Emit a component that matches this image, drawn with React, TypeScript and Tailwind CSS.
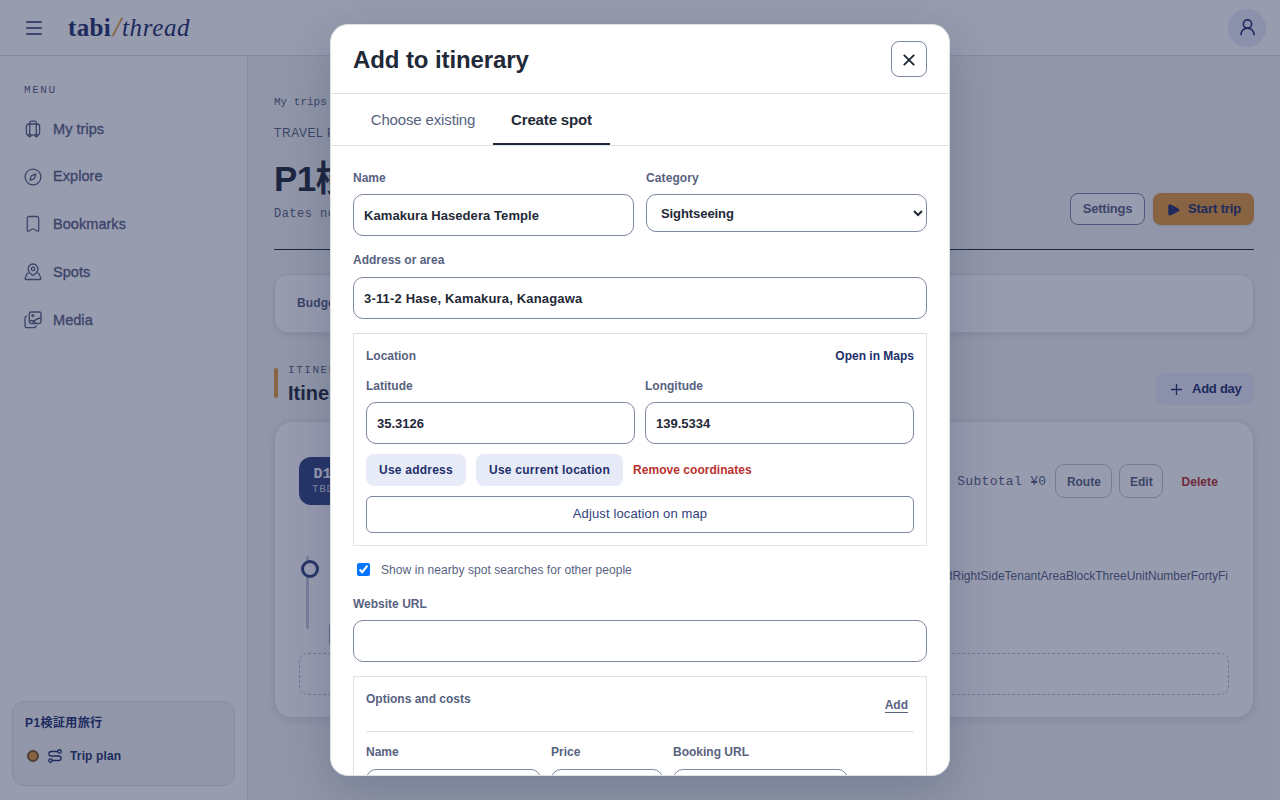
import type { ReactNode } from "react";

const SANS = "font-['Liberation_Sans','Noto_Sans_CJK_JP',sans-serif]";
const MONO = "font-['Liberation_Mono',monospace]";
const LABEL = "text-[12px] leading-4 font-bold text-[#58627f]";
const INPUT =
  "block w-full h-[42px] rounded-[10px] border border-[#7b86a0] bg-white px-[10px] text-[13px] font-bold text-[#1f2937] outline-none";

function Icon({ size = 18, width = 1.5, className = "", children }: { size?: number; width?: number; className?: string; children: ReactNode }) {
  return (
    <svg
      width={size}
      height={size}
      viewBox="0 0 18 18"
      fill="none"
      stroke="currentColor"
      strokeWidth={width}
      strokeLinecap="round"
      strokeLinejoin="round"
      className={`shrink-0 ${className}`}
    >
      {children}
    </svg>
  );
}

const LuggageIcon = () => (
  <Icon width={1.3}>
    <rect x="2.400" y="4" width="13.200" height="11.200" rx="2.400" />
    <path d="M5.700 14V3.200A2 2 0 0 1 7.700 1.200h2.600a2 2 0 0 1 2 2V14" />
    <circle cx="5.700" cy="15.500" r="1.300" />
    <circle cx="12.300" cy="15.500" r="1.300" />
  </Icon>
);
const CompassIcon = () => (
  <Icon width={1.3}>
    <circle cx="9" cy="9" r="7.9" />
    <path d="M7.500 7.900 11.300 6.100c.4-.2.700.1.500.5L10.400 10.200c-.1.300-.3.500-.5.600L6.600 12.100c-.4.200-.7-.1-.5-.5L7.100 8.400c.1-.2.200-.4.400-.5Z" />
  </Icon>
);
const BookmarkIcon = () => (
  <Icon width={1.3}>
    <path d="M3.300 15.200V3.200a1.700 1.700 0 0 1 1.700-1.700h8a1.700 1.700 0 0 1 1.700 1.700v12c0 1-.7 1.300-1.500.8L9.600 14a1.100 1.100 0 0 0-1.200 0L4.800 16c-.8.500-1.500.2-1.500-.8Z" />
  </Icon>
);
const SpotIcon = () => (
  <Icon width={1.3}>
    <path d="M9 12.300c-.5 0-.9-.2-1.200-.5C5.800 10 4.100 8.300 4.100 5.900a4.900 4.900 0 0 1 9.800 0c0 2.400-1.700 4.100-3.700 5.900-.3.300-.7.500-1.200.5Z" />
    <circle cx="9" cy="5.900" r="1.700" />
    <path d="M4.200 10.200c-.7.200-1.200.6-1.500 1.300L1.200 15c-.3.800.2 1.500 1 1.500h13.600c.8 0 1.300-.7 1-1.500l-1.500-3.500c-.3-.7-.8-1.100-1.500-1.300" />
  </Icon>
);
const MediaIcon = () => (
  <Icon width={1.3}>
    <rect x="5.300" y="1" width="11.700" height="11.500" rx="1.800" />
    <circle cx="8.800" cy="4.600" r="0.900" />
    <path d="M8.600 12.300c1.400-2.400 3.800-5 8.200-5.300M6 9.900c2-.8 4-.1 5.200 1.400" />
    <path d="M2.600 5.200C1.500 5.300 1 5.900 1 7v7.400c0 1.400.8 2.200 2.200 2.200h7c1.200 0 1.800-.6 1.900-1.700" />
  </Icon>
);
const RouteIcon = () => (
  <Icon size={14} width={1.7}>
    <circle cx="14.800" cy="3.200" r="2.200" />
    <circle cx="3.200" cy="14.800" r="2.200" />
    <path d="M12.300 3.200H4.100a2.900 2.900 0 0 0 0 5.800h9.800a2.900 2.900 0 0 1 0 5.800H5.700" />
  </Icon>
);

const MENU = [
  { label: "My trips", icon: <LuggageIcon /> },
  { label: "Explore", icon: <CompassIcon /> },
  { label: "Bookmarks", icon: <BookmarkIcon /> },
  { label: "Spots", icon: <SpotIcon /> },
  { label: "Media", icon: <MediaIcon /> },
];

function Header() {
  return (
    <header className="flex h-14 shrink-0 items-center border-b border-[#dfe2e2] bg-white pl-[26px] pr-[14px]">
      <svg width="16" height="16" viewBox="0 0 16 16" stroke="#22306b" strokeWidth="1.6" strokeLinecap="round">
        <path d="M0.800 2h14.400M0.800 8h14.400M0.800 14h14.400" />
      </svg>
      <div className="ml-[26px] flex items-baseline whitespace-nowrap font-['Liberation_Serif',serif] text-[25px] leading-8 text-[#22306b]">
        <span className="w-[44px] font-bold tracking-[0.35px]">tabi</span>
        <span className="w-[10px] text-center text-[27px] italic text-[#e39a3b] [-webkit-text-stroke:0.5px_currentColor]">/</span>
        <span className="italic tracking-[0.65px]">thread</span>
      </div>
      <div className="ml-auto flex size-[38px] items-center justify-center rounded-full bg-[#e7ebf7] text-[#22306b]">
        <Icon width={1.6}>
          <circle cx="9.500" cy="5" r="4.100" />
          <path d="M3 15.800c0-3.800 2.700-6.700 6.500-6.700s6.500 2.900 6.500 6.700" />
        </Icon>
      </div>
    </header>
  );
}

function Sidebar() {
  return (
    <aside className="flex w-[248px] shrink-0 flex-col border-r border-[#dfe2e2] bg-white px-3 pb-[14px] pt-[26px]">
      <div className={`${MONO} pl-3 text-[11px] leading-4 tracking-[1.54px] text-[#58627f]`}>MENU</div>
      <nav className="mt-[7px]">
        {MENU.map((item) => (
          <div key={item.label} className="flex h-[47.8px] items-center gap-[11px] pl-3 text-[#58627f]">
            {item.icon}
            <span className="pt-px text-[14.5px] tracking-[0.05px] [-webkit-text-stroke:0.35px_currentColor]">{item.label}</span>
          </div>
        ))}
      </nav>
      <div className="mt-auto h-[85px] rounded-xl border border-[#dfe2e2] bg-[#f3f6f3] px-3 pt-3 text-[12px] font-bold text-[#22306b]">
        <div className="leading-[18px] tracking-[0.4px]">P1検証用旅行</div>
        <div className="mt-[15px] flex h-[18px] items-center pl-[2px]">
          <span className="size-3 rounded-full border-2 border-[#7a5326] bg-[#e39a3b]" />
          <span className="ml-[9px]">
            <RouteIcon />
          </span>
          <span className="ml-2 tracking-[0.15px]">Trip plan</span>
        </div>
      </div>
    </aside>
  );
}

function Main() {
  return (
    <main className="flex min-w-0 flex-1 flex-col overflow-hidden bg-[#f3f6f3] px-[26px] pt-[39px] text-[#1f2a44]">
      <div className={`${MONO} text-[11px] leading-[14px] text-[#58627f]`}>My trips / P1検証用旅行</div>
      <div className="mt-[16px] text-[12px] leading-4 tracking-[0.6px] text-[#58627f]">TRAVEL PLAN</div>
      <div className="flex h-[109px] items-start justify-between border-b border-[#1f2937]">
        <div>
          <h1 className="mt-[17px] text-[35px] font-bold leading-[42px] tracking-[-0.7px] text-[#1f2937]">P1検証用旅行</h1>
          <div className={`${MONO} mt-[6px] text-[12px] leading-4 tracking-[0.48px] text-[#58627f]`}>Dates not set</div>
        </div>
        <div className="mt-[52px] flex gap-2 text-[13px] font-bold">
          <div className="flex h-8 w-[75px] items-center justify-center rounded-lg border border-[#7b86a0] bg-white pb-px tracking-[-0.25px] text-[#58627f]">Settings</div>
          <div className="flex h-8 w-[101px] items-center rounded-lg bg-[#e39a3b] pb-px pl-[15px] text-[#22306b] shadow-sm">
            <svg width="12" height="12" viewBox="0 0 12 12" className="mt-[2px]" fill="currentColor">
              <path d="M0.300 1.900C.3.700 1.300 0 2.400.6 5.800 2 8.500 3.500 10.900 5.100c.8.600.8 1.300 0 1.900-2.400 1.600-5.100 3-8.500 4.400C1.300 11.900.3 11.300.3 10.100Z" />
            </svg>
            <span className="ml-2 tracking-[-0.1px]">Start trip</span>
          </div>
        </div>
      </div>
      <div className="mt-[24px] flex h-[59px] shrink-0 items-center rounded-[14px] border border-[#e3e6e6] bg-white px-[22px] pb-[2px] text-[12px] font-bold tracking-[0.1px] text-[#58627f] shadow-[0_2px_6px_rgba(30,40,80,0.1)]">
        Budget
      </div>
      <div className="mt-[29px] flex h-[48px] shrink-0 items-start justify-between">
        <div className="flex">
          <div className="mt-[6px] h-[30px] w-1 rounded-sm bg-[#e39a3b]" />
          <div className="ml-[10px]">
            <div className={`${MONO} text-[11px] leading-[17px] tracking-[1.54px] text-[#58627f]`}>ITINERARY</div>
            <div className="mt-px text-[20px] font-bold leading-[26px] text-[#1f2937]">Itinerary</div>
          </div>
        </div>
        <div className="mt-[11px] flex h-8 w-[98px] items-center rounded-lg bg-[#e7ebf7] pl-[15px] text-[13px] font-bold text-[#22306b]">
          <svg width="11" height="11" viewBox="0 0 11 11" stroke="currentColor" strokeWidth="1.300" strokeLinecap="round" className="mt-px">
            <path d="M5.500 0.500v10M0.500 5.500h10" />
          </svg>
          <span className="ml-[10px] tracking-[-0.25px]">Add day</span>
        </div>
      </div>
      <section className="mt-[11px] h-[297px] shrink-0 rounded-[18px] border border-[#e3e6e6] bg-white px-6 pt-[35px] shadow-[0_2px_8px_rgba(30,40,80,0.12)]">
        <div className="flex h-12 items-center">
          <div className={`${MONO} flex h-12 w-[60px] flex-col rounded-xl bg-[#32447e] pl-[13px] pt-[10px] text-white`}>
            <span className="pl-[1.500px] text-[15px] font-bold leading-4">D1</span>
            <span className="text-[11px] leading-[13px] tracking-[0.6px] text-[#d5daea]">TBD</span>
          </div>
          <div className="ml-auto flex items-center text-[12px] font-bold text-[#58627f]">
            <span className={`${MONO} mr-[9px] pt-px text-[13px] font-normal tracking-[0.300px]`}>Subtotal ¥0</span>
            <span className="mr-[7px] flex h-[34px] w-[57px] items-center justify-center rounded-[9px] border border-[#c0c6c8] pt-px">Route</span>
            <span className="mr-[18px] flex h-[34px] w-[44px] items-center justify-center rounded-[9px] border border-[#c0c6c8] pt-px">Edit</span>
            <span className="mr-[11px] pt-px tracking-[0.1px] text-[#b8322f]">Delete</span>
          </div>
        </div>
        <div className="relative mt-[51px] h-[97px]">
          <div className="absolute left-[7px] top-0 h-[73px] w-[3px] rounded bg-[#c5ccdd]" />
          <div className="absolute left-[2px] top-[4px] size-[18px] rounded-full border-[3px] border-[#32447e] bg-white" />
          <div className="absolute left-[30px] top-[66px] h-[25px] w-10 rounded border border-[#a0a5a8]" />
          <div className="absolute left-10 right-px top-[12px] flex h-4 justify-end overflow-hidden whitespace-nowrap text-[12px] leading-4 text-[#58627f]">
            SecondBuildingEastWingGroundRightSideTenantAreaBlockThreeUnitNumberFortyFi
          </div>
        </div>
        <div className="h-[42px] rounded-[9px] border border-dashed border-[#b9bfc6]" />
      </section>
    </main>
  );
}

function Modal() {
  return (
    <div
      role="dialog"
      className="flex h-[752px] w-[620px] flex-col overflow-hidden rounded-[18px] border border-[#dfe3e0] bg-white shadow-[0_16px_48px_rgba(27,36,78,0.22)]"
    >
      <div className="flex h-[69px] shrink-0 items-center justify-between border-b border-[#dfe2e2] px-[22px]">
        <h2 className="pt-[2px] text-[24px] font-bold tracking-[-0.1px] text-[#1f2937]">Add to itinerary</h2>
        <button className="flex size-9 items-center justify-center rounded-lg border border-[#7b86a0]">
          <svg width="12" height="12" viewBox="0 0 12 12" stroke="#1f2937" strokeWidth="1.900" className="mt-px">
            <path d="M0.800 0.800 11.200 11.200M11.200 0.800 0.800 11.200" />
          </svg>
        </button>
      </div>
      <div className="flex h-[52px] shrink-0 border-b border-[#dfe2e2] px-[22px] text-[15px] tracking-[-0.15px]">
        <div className="flex w-[140px] justify-center pt-[17px] leading-[18px] text-[#58627f]">Choose existing</div>
        <div className="flex w-[117px] justify-center border-b-2 border-[#1f2937] pt-[17px] font-bold leading-[18px] text-[#1f2937]">
          Create spot
        </div>
      </div>
      <form className="min-h-0 flex-1 overflow-hidden px-[22px] pt-6">
        <div className="grid grid-cols-2 items-start gap-3">
          <label className={LABEL}>
            <span className="mb-2 block">Name</span>
            <input className={`${INPUT} tracking-[0.08px]`} defaultValue="Kamakura Hasedera Temple" />
          </label>
          <label className={LABEL}>
            <span className="mb-2 block tracking-[0.1px]">Category</span>
            <select className="block h-[38px] w-full rounded-[10px] border border-[#7b86a0] bg-white px-[10px] text-[13px] font-bold tracking-[-0.08px] text-[#1f2937]">
              <option>Sightseeing</option>
            </select>
          </label>
        </div>
        <label className={`${LABEL} mt-4 block`}>
          <span className="mb-[9px] block">Address or area</span>
          <input className={`${INPUT} tracking-[0.17px]`} defaultValue="3-11-2 Hase, Kamakura, Kanagawa" />
        </label>
        <div className="mt-[14px] h-[213px] border border-[#dfe2e2] px-3 pt-[14px]">
          <div className="flex justify-between">
            <span className={LABEL}>Location</span>
            <span className="text-[12px] font-bold leading-4 text-[#22306b]">Open in Maps</span>
          </div>
          <div className="mt-[14px] grid grid-cols-2 gap-[10px]">
            <label className={LABEL}>
              <span className="mb-2 block">Latitude</span>
              <input className={INPUT} defaultValue="35.3126" />
            </label>
            <label className={LABEL}>
              <span className="mb-2 block">Longitude</span>
              <input className={INPUT} defaultValue="139.5334" />
            </label>
          </div>
          <div className="mt-[10px] flex items-center gap-[10px] text-[12px] font-bold text-[#22306b]">
            <span className="flex h-8 w-[100px] items-center justify-center rounded-lg bg-[#e7ebf7] tracking-[0.22px]">Use address</span>
            <span className="flex h-8 w-[147px] items-center justify-center rounded-lg bg-[#e7ebf7] tracking-[0.25px]">Use current location</span>
            <span className="tracking-[0.04px] text-[#b8322f]">Remove coordinates</span>
          </div>
          <div className="mt-[10px] flex h-[37px] items-center justify-center rounded-md border border-[#7b86a0] pb-[2px] text-[13px] tracking-[0.13px] text-[#32407a]">
            Adjust location on map
          </div>
        </div>
        <label className="mt-4 flex h-4 items-center text-[12px] text-[#58627f]">
          <input type="checkbox" defaultChecked className="mb-px ml-1 size-[13px]" />
          <span className="ml-[11px] tracking-[0.06px]">Show in nearby spot searches for other people</span>
        </label>
        <label className={`${LABEL} mt-[18px] block`}>
          <span className="mb-2 block">Website URL</span>
          <input className={INPUT} />
        </label>
        <div className="mt-[14px] border border-[#dfe2e2] px-3 pt-[14px]">
          <div className="flex h-[41px] justify-between border-b border-[#dfe2e2]">
            <span className={LABEL}>Options and costs</span>
            <span className="mr-[6px] mt-[6px] h-[16px] border-b border-[#58627f] text-[12px] font-bold leading-4 text-[#58627f]">Add</span>
          </div>
          <div className="mt-3 grid grid-cols-[175px_112px_175px] gap-[10px]">
            {["Name", "Price", "Booking URL"].map((name) => (
              <label key={name} className={LABEL}>
                <span className="mb-[9px] block">{name}</span>
                <input className={INPUT} />
              </label>
            ))}
          </div>
        </div>
      </form>
    </div>
  );
}

export default function App() {
  return (
    <div className={`${SANS} relative h-[800px] w-full overflow-hidden`}>
      <div className="flex h-full flex-col">
        <Header />
        <div className="flex min-h-0 flex-1">
          <Sidebar />
          <Main />
        </div>
      </div>
      <div className="absolute inset-0 flex items-center justify-center bg-[#1b244e]/45">
        <Modal />
      </div>
    </div>
  );
}
